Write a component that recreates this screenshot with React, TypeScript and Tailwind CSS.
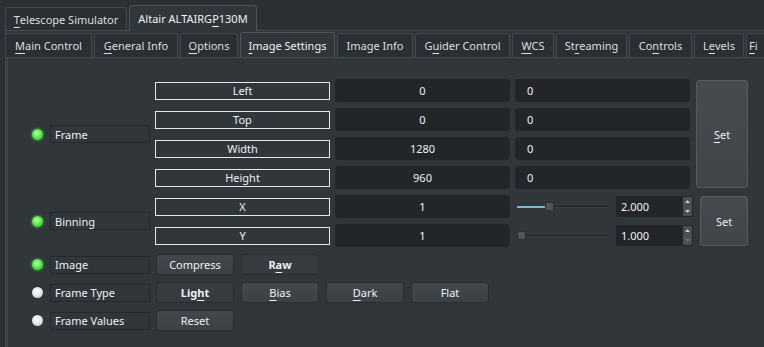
import React from 'react'

type Tab = { label: string; u: number; w: number; active?: boolean; clip?: boolean }

const outerTabs: Tab[] = [
	{ label: 'Telescope Simulator', u: 0, w: 122 },
	{ label: 'Altair ALTAIRGP130M', u: 14, w: 128, active: true },
]

const innerTabs: Tab[] = [
	{ label: 'Main Control', u: 0, w: 87 },
	{ label: 'General Info', u: 0, w: 84 },
	{ label: 'Options', u: 0, w: 58 },
	{ label: 'Image Settings', u: 0, w: 95, active: true },
	{ label: 'Image Info', u: -1, w: 76 },
	{ label: 'Guider Control', u: 1, w: 95 },
	{ label: 'WCS', u: 0, w: 42 },
	{ label: 'Streaming', u: 2, w: 71 },
	{ label: 'Controls', u: 2, w: 63 },
	{ label: 'Levels', u: 1, w: 50 },
	{ label: 'Fi', u: 0, w: 44, clip: true },
]

// text with a Qt style mnemonic underline
function Mn({ text, u }: { text: string; u: number }) {
	if (u < 0) return <>{text}</>
	return (
		<>
			{text.slice(0, u)}
			<span className="underline underline-offset-[3px] decoration-1">{text[u]}</span>
			{text.slice(u + 1)}
		</>
	)
}

function TabButton({ tab, outer }: { tab: Tab; outer?: boolean }) {
	const h = tab.active ? 'h-[26px] -mb-px' : outer ? 'h-[23px]' : 'h-[24px]'
	return (
		<div
			style={{ width: tab.w }}
			className={`${h} shrink-0 flex items-center whitespace-nowrap rounded-t-[3px] border border-b-0 leading-none ${
				tab.clip ? 'pl-[2px]' : 'justify-center'
			} ${tab.active ? 'bg-[#31363b] border-[#4f5459] text-[#eff0f1]' : 'bg-[#2b2f33] border-[#43484d] text-[#dcdedf]'}`}>
			<Mn text={tab.label} u={tab.u} />
		</div>
	)
}

function Led({ on }: { on: boolean }) {
	return (
		<div
			className={`w-[11px] h-[11px] rounded-full shrink-0 ${
				on
					? 'bg-[radial-gradient(circle_at_45%_40%,#c8ffc0_0%,#55ec48_45%,#22b51e_100%)] shadow-[0_0_3px_#3fd83a]'
					: 'bg-[radial-gradient(circle_at_45%_40%,#ffffff_0%,#e4e5e6_50%,#a8aaac_100%)]'
			}`}
		/>
	)
}

function GroupLabel({ on, text }: { on: boolean; text: string }) {
	return (
		<div className="flex items-center gap-[7px] w-[118px] shrink-0">
			<Led on={on} />
			<div className="w-[100px] h-[18px] border border-[#26292c] flex items-center pl-[4px] leading-none text-[#eff0f1]">
				{text}
			</div>
		</div>
	)
}

function NameBox({ text }: { text: string }) {
	return (
		<div className="w-[175px] h-[18px] border border-[#e6e7e8] flex items-center justify-center leading-none text-[#eff0f1] shrink-0">
			{text}
		</div>
	)
}

function Field({ text, left }: { text: string; left?: boolean }) {
	return (
		<div
			className={`w-[175px] h-[23px] rounded-[3px] bg-[#232629] flex items-center leading-none text-[#eff0f1] shrink-0 ${
				left ? 'pl-[12px]' : 'justify-center'
			}`}>
			{text}
		</div>
	)
}

function Btn({ text, u = -1, checked }: { text: string; u?: number; checked?: boolean }) {
	return (
		<div
			className={`w-[78px] h-[21px] rounded-[3px] border flex items-center justify-center leading-none text-[#eff0f1] shrink-0 ${
				checked
					? 'bg-[#363b40] border-[#2a2d31] font-bold'
					: 'bg-gradient-to-b from-[#42474c] to-[#3c4146] border-[#292c30]'
			}`}>
			<Mn text={text} u={u} />
		</div>
	)
}

function Slider({ fill }: { fill: number }) {
	return (
		<div className="w-[92px] h-[23px] ml-[2px] flex items-center shrink-0">
			{fill > 0 && <div style={{ width: fill }} className="h-[2px] bg-[#7ab9d9]" />}
			<div className="w-[9px] h-[9px] rounded-[2px] bg-[#50555a] border border-[#2c2f33] shrink-0" />
			<div className="flex-1 h-[2px] bg-[#1e2124] border-b border-[#3b4045]" />
		</div>
	)
}

function Spin({ value, atMin }: { value: string; atMin?: boolean }) {
	return (
		<div className="w-[77px] h-[21px] ml-[7px] rounded-[2px] bg-[#232629] flex shrink-0">
			<div className="flex-1 flex items-center pl-[5px] leading-none text-[#eff0f1]">{value}</div>
			<div className="w-[9px] my-[1px] mr-[1px] rounded-[1px] bg-[#4a4f54] flex flex-col justify-between items-center py-[3px]">
				<svg width="5" height="3" viewBox="0 0 5 3">
					<path d="M0 3 L2.5 0 L5 3 Z" fill="#c8cacc" />
				</svg>
				<svg width="5" height="3" viewBox="0 0 5 3">
					<path d="M0 0 L2.5 3 L5 0 Z" fill={atMin ? '#6d7175' : '#c8cacc'} />
				</svg>
			</div>
		</div>
	)
}

function SetButton({ className, mnemonic }: { className: string; mnemonic?: boolean }) {
	return (
		<div
			className={`${className} rounded-[3px] border border-[#575b60] bg-gradient-to-b from-[#464b50] to-[#40454a] flex items-center justify-center leading-none text-[#eff0f1]`}>
			<Mn text="Set" u={mnemonic ? 0 : -1} />
		</div>
	)
}

export default function App() {
	const frameRows = [
		{ name: 'Left', value: '0' },
		{ name: 'Top', value: '0' },
		{ name: 'Width', value: '1280' },
		{ name: 'Height', value: '960' },
	]

	return (
		<div className="w-[764px] h-[347px] overflow-hidden bg-[#2c3034] font-['Noto_Sans',sans-serif] text-[11px] text-[#eff0f1]">
			<div className="h-[30px] pl-[5px] flex items-end gap-[2px]">
				{outerTabs.map((t) => (
					<TabButton key={t.label} tab={t} outer />
				))}
			</div>

			<div className="ml-[5px] h-[317px] border-l border-t border-[#474c51] bg-[#31363b] pt-[1px] flex flex-col">
				<div className="h-[25px] -ml-px flex items-end gap-[2px]">
					{innerTabs.map((t) => (
						<TabButton key={t.label} tab={t} />
					))}
				</div>

				<div className="flex-1 ml-[1px] border-l border-t border-[#474c51] bg-[#31363b] pt-[21px] pl-[24px]">
					{/* Frame */}
					<div className="flex items-center">
						<GroupLabel on text="Frame" />
						<div className="ml-[5px] flex">
							<div className="flex flex-col gap-[6px]">
								{frameRows.map((r) => (
									<div key={r.name} className="flex items-center gap-[5px]">
										<NameBox text={r.name} />
										<Field text={r.value} />
										<Field text="0" left />
									</div>
								))}
							</div>
							<SetButton className="ml-[6px] w-[52px] my-[1px]" mnemonic />
						</div>
					</div>

					{/* Binning */}
					<div className="flex items-center mt-[6px]">
						<GroupLabel on text="Binning" />
						<div className="ml-[5px] flex">
							<div className="flex flex-col gap-[6px]">
								<div className="flex items-center gap-[5px]">
									<NameBox text="X" />
									<Field text="1" />
									<div className="flex items-center">
										<Slider fill={28} />
										<Spin value="2.000" />
									</div>
								</div>
								<div className="flex items-center gap-[5px]">
									<NameBox text="Y" />
									<Field text="1" />
									<div className="flex items-center">
										<Slider fill={0} />
										<Spin value="1.000" atMin />
									</div>
								</div>
							</div>
							<SetButton className="ml-[7px] w-[48px] my-[1px]" />
						</div>
					</div>

					<div className="mt-[7px] flex flex-col gap-[7px]">
						<div className="flex items-center">
							<GroupLabel on text="Image" />
							<div className="ml-[6px] flex gap-[7px]">
								<Btn text="Compress" />
								<Btn text="Raw" u={1} checked />
							</div>
						</div>
						<div className="flex items-center">
							<GroupLabel on={false} text="Frame Type" />
							<div className="ml-[6px] flex gap-[7px]">
								<Btn text="Light" u={3} checked />
								<Btn text="Bias" u={0} />
								<Btn text="Dark" u={0} />
								<Btn text="Flat" />
							</div>
						</div>
						<div className="flex items-center">
							<GroupLabel on={false} text="Frame Values" />
							<div className="ml-[6px] flex gap-[7px]">
								<Btn text="Reset" />
							</div>
						</div>
					</div>
				</div>
			</div>
		</div>
	)
}
